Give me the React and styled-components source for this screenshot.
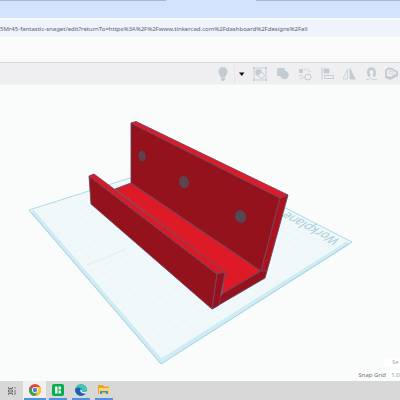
import React from "react";
import styled, { createGlobalStyle } from "styled-components";

const Global = createGlobalStyle`
  * { box-sizing: border-box; }
  html, body, #root { height: 100%; margin: 0; }
  body { overflow: hidden; background: #fafafa; font-family: "Open Sans", "Noto Sans", sans-serif; }
  button { border: 0; padding: 0; background: none; }
`;
const Screen = styled.div`
  display: flex;
  flex-direction: column;
  height: 100vh;
`;
const TabStrip = styled.div`
  display: flex;
  justify-content: space-between;
  height: 18px;
  flex: none;
  background: #d4e3fd;
`;
const TabEdge = styled.span`
  width: ${(p) => p.$width};
  height: 1px;
  background: #a5b7d8;
`;
const AddressBar = styled.form`
  display: flex;
  flex: none;
  height: 21px;
  padding: 2px 0;
  background: #fbfcfe;
`;
const AddressInput = styled.input`
  flex: 1;
  min-width: 0;
  border: 0;
  padding: 1px 0 0;
  outline: 0;
  background: #eff3fc;
  color: #5d6168;
  font: 6px "Noto Sans", "Open Sans", sans-serif;
`;
const PageHeader = styled.header`
  flex: none;
  height: 24px;
  background: #fafafa;
  border-bottom: 1px solid #d6dadb;
`;
const Toolbar = styled.div`
  display: flex;
  flex: none;
  justify-content: flex-end;
  align-items: center;
  height: 22px;
  background: #efeff1;
  border-bottom: 1px solid #f4f4f5;
  overflow: hidden;
`;
const Tool = styled.button`
  display: flex;
  flex: none;
  align-items: center;
  justify-content: center;
  width: ${(p) => p.$width || 22}px;
  height: 20px;
  color: #c3cbd3;
  border-left: ${(p) => (p.$divided ? "1px solid #e4e6e9" : "0")};
`;
const Workspace = styled.main`
  display: grid;
  grid-template: minmax(0, 1fr) / minmax(0, 1fr);
  flex: 1;
  min-height: 0;
  background: #fafbfb;
`;
const Scene = styled.svg`
  grid-area: 1 / 1;
  display: block;
  width: 100%;
  height: 100%;
`;
const Footer = styled.div`
  grid-area: 1 / 1;
  align-self: end;
  justify-self: end;
  display: flex;
  flex-direction: column;
  align-items: flex-end;
  gap: 2px;
  color: #686c73;
  font-size: 6px;
`;
const Settings = styled.button`
  width: 16px;
  height: 9px;
  padding-left: 8px;
  background: #fff;
  color: #a0a3a7;
  font: 6px/9px "Open Sans", sans-serif;
  text-align: left;
`;
const SnapRow = styled.div`
  display: flex;
  align-items: center;
  gap: 4px;
  height: 12px;
`;
const SnapValue = styled.button`
  width: 10px;
  height: 8px;
  padding-left: 1px;
  background: #fff;
  color: #8b8e92;
  font: 6px/8px "Open Sans", sans-serif;
`;
const Taskbar = styled.nav`
  display: flex;
  flex: none;
  height: 19px;
  background: #d8d8d8;
`;
const TaskButton = styled.button`
  display: flex;
  align-items: center;
  justify-content: center;
  width: ${(p) => p.$width}px;
  height: 19px;
  background: ${(p) => (p.$active ? "#f0f0f0" : "transparent")};
`;
const AppMark = styled.span`
  display: flex;
  align-items: center;
  justify-content: center;
  width: ${(p) => p.$line}px;
  height: 19px;
  border-bottom: 2px solid #4d91e0;
`;

const icons = {
  bulb: (
    <svg width="12" height="14" viewBox="0 0 12 14">
      <path d="M6 0a4.700 4.700 0 0 0-4.700 4.700C1.300 7 3.300 8 3.700 10h4.600C8.700 8 10.700 7 10.700 4.700A4.700 4.700 0 0 0 6 0z" fill="currentColor" />
      <path d="M4 10.500h4v2L7 14H5l-1-1.500z" fill="currentColor" />
    </svg>
  ),
  caret: <svg width="6" height="4" viewBox="0 0 6 4"><path d="M0 .5h5.500L2.800 4z" fill="#111" /></svg>,
  group: (
    <svg width="14" height="14" viewBox="0 0 14 14" fill="none" stroke="currentColor">
      <path d="M1 1h12v12H1z" strokeWidth=".9" />
      <path d="M0 0h2v2H0zM12 0h2v2h-2zM0 12h2v2H0zM12 12h2v2h-2z" fill="currentColor" stroke="none" />
      <path d="M3 3h5v5H3z" fill="currentColor" /><circle cx="8.500" cy="8.500" r="2.800" fill="#efeff1" />
    </svg>
  ),
  union: (
    <svg width="13" height="13" viewBox="0 0 13 13" fill="currentColor">
      <rect x="1" y="1" width="8" height="8" rx="1.500" /><circle cx="8.500" cy="8" r="4.300" />
    </svg>
  ),
  ungroup: (
    <svg width="14" height="14" viewBox="0 0 14 14" fill="none" stroke="currentColor">
      <path d="M1 2h4v4H1z" fill="currentColor" stroke="none" /><circle cx="10" cy="10" r="3" />
      <path d="M7 1v3M9 4l2-3M10 5l3-1M1 9l3-1M2 12l3-2M6 9v3" strokeWidth=".8" />
    </svg>
  ),
  align: (
    <svg width="13" height="13" viewBox="0 0 13 13" fill="none" stroke="currentColor">
      <path d="M1 0v13" /><path d="M3 2h5v4H3z" fill="currentColor" /><path d="M3.500 8.500h9v3h-9z" />
    </svg>
  ),
  mirror: (
    <svg width="14" height="12" viewBox="0 0 14 12" fill="none" stroke="currentColor">
      <path d="M8 .5V11h5z" fill="currentColor" /><path d="M5.500 1v10H1z" strokeWidth=".8" />
    </svg>
  ),
  magnet: (
    <svg width="13" height="13" viewBox="0 0 13 13" fill="none" stroke="currentColor">
      <path d="M4.500 9.500 3.200 5.500C2.600.3 10 .3 9.700 5.500L9 9.500" strokeWidth="2.600" />
      <path d="M1 12.500h2.500l2-1.500 2 1.500H12" strokeWidth=".8" />
    </svg>
  ),
  ruler: (
    <svg width="14" height="13" viewBox="0 0 14 13" fill="none" stroke="currentColor">
      <path d="M2 8V3.500C3 1.500 6 1 8 2l6 3.500" strokeWidth="1.800" />
      <path d="M1 7.500 6 10l8-4.500V9l-8 4-5-2.500z" fill="currentColor" stroke="none" /><ellipse cx="7" cy="5.500" rx="2" ry="1.300" strokeWidth=".8" />
    </svg>
  ),
};

const tools = [
  ["Show all", "bulb", 22],
  ["Show options", "caret", 14, true],
  ["Group", "group", 23],
  ["Union", "union", 22],
  ["Ungroup", "ungroup", 23],
  ["Align", "align", 22],
  ["Mirror", "mirror", 22],
  ["Magnet", "magnet", 22],
  ["Ruler", "ruler", 18],
];

function Grid() {
  const lines = [];
  for (let i = 1; i < 24; i++) {
    const t = i / 24;
    lines.push(`M${29 + 161 * t} ${125 - 51 * t}L${161 + 191 * t} ${279 - 122 * t}`);
    lines.push(`M${29 + 132 * t} ${125 + 154 * t}L${190 + 162 * t} ${74 + 83 * t}`);
  }
  return <path d={lines.join("")} stroke="#dceff3" strokeWidth=".4" opacity=".4" />;
}

function Model() {
  return (
    <Scene viewBox="0 0 400 296" preserveAspectRatio="xMidYMid meet" role="img" aria-label="Red wall bracket on a workplane">
      <path d="M29 125 190 74 352 157 161 279z" fill="#f0f8fa" />
      <Grid />
      <path d="M87 180l16-6 23-10" stroke="#d5dcde" strokeWidth=".5" fill="none" />
      <path d="M29 125 190 74 352 157" fill="none" stroke="#add9e6" />
      <path d="M32 126 161 276 348 158" fill="none" stroke="#cfebf3" strokeWidth="4" />
      <path d="M29 125 161 279 352 157" fill="none" stroke="#9dd0e2" />
      <text transform="translate(341 155) rotate(208) skewX(-29)" fill="#a3cbd8" fontFamily="Open Sans, sans-serif" fontSize="12">Workplane</text>
      <g stroke="#6b4661" strokeWidth=".9" strokeLinejoin="round">
        <path d="M131 98 115 104 225 187 222 209 261 186z" fill="#df1a27" />
        <path d="M131 38 280 113 261 186 131 98z" fill="#93121b" />
        <path d="M131 38 136 36.500 288 110 280 113z" fill="#df1a27" />
        <path d="M280 113 288 110 267 186 261 186z" fill="#ab121d" />
        <path d="M261 186 267 186 265 193 212 224 222 209z" fill="#94121b" />
        <path d="M89 91 217 189 212 224 91 119z" fill="#94121b" />
        <path d="M89 91 94 89 225 187 217 189z" fill="#d91925" />
        <path d="M217 189 225 187 219 220 212 224z" fill="#990f1b" />
      </g>
      <g fill="#5a4650" stroke="#51475d">
        <ellipse cx="142" cy="71" rx="3" ry="5" transform="rotate(-10 142 71)" />
        <ellipse cx="184" cy="97" rx="4.500" ry="5.500" transform="rotate(-15 184 97)" />
        <ellipse cx="240.500" cy="131.500" rx="5" ry="6" transform="rotate(-20 240.500 131.500)" />
      </g>
      <path d="M140 68 143 75M181.500 94 187 100" stroke="#8b303b" />
    </Scene>
  );
}

const Chrome = () => (
  <svg width="12" height="12" viewBox="0 0 12 12">
    <circle cx="6" cy="6" r="6" fill="#e34537" />
    <path d="M.8 3A6 6 0 0 0 6 12l2.600-4.500H3.400z" fill="#36a557" />
    <path d="M6 12A6 6 0 0 0 11.200 3H6l2.600 4.500z" fill="#f9c82e" />
    <circle cx="6" cy="6" r="3" fill="#fff" /><circle cx="6" cy="6" r="2.200" fill="#4285dd" />
  </svg>
);
const GreenApp = () => (
  <svg width="12" height="12" viewBox="0 0 12 12">
    <rect width="12" height="12" rx="2" fill="#08ad50" />
    <path d="M3 2.500h2.500v7H3zM6.500 2.500H9v3H6.500zM6.500 6.500H9v3H6.500z" fill="#effff4" />
  </svg>
);
const Edge = () => (
  <svg width="12" height="12" viewBox="0 0 12 12">
    <circle cx="6" cy="6" r="5.800" fill="#1876c9" />
    <path d="M.4 5C1.500-1.500 11.800-1 11.800 5.400 11.600 8 8 8.300 7 7c1-1.500-.5-3-2.500-3C2.500 4 1 4.500.4 5z" fill="#45c6b1" />
    <path d="M4.400 6c0 3 3 4.400 6.300 3.400C7 14 .2 11.700.3 6 .7 3.500 4 3 5.500 4.300z" fill="#2060ac" />
    <path d="M5.200 5.800c1-1 2.200 0 1.700 1.300.8 1.200 3 1 4.800.2l-.8 2C8 10 5 9 5.200 5.800z" fill="#e6eff4" />
  </svg>
);
const Folder = () => (
  <svg width="12" height="11" viewBox="0 0 12 11">
    <path d="M0 1h5l1 1.500h5V10H0z" fill="#e6a72c" /><path d="M1 4h10.500v6H1z" fill="#ffd56a" />
    <path d="M2 10V7h8v3H8V8.500H4V10z" fill="#3e91c9" />
  </svg>
);
const TaskView = () => (
  <svg width="8" height="8" viewBox="0 0 8 8" fill="none" stroke="#5a5a5a" strokeWidth=".8">
    <path d="M.5 0v1.500h4V0M.5 8V6.500h4V8M.5 3h4v2h-4zM7 0v1.500M7 3v5" />
  </svg>
);

export default function App() {
  return (
    <Screen>
      <Global />
      <TabStrip><TabEdge $width="41.500%" /><TabEdge $width="36%" /></TabStrip>
      <AddressBar>
        <AddressInput aria-label="Address" readOnly value="5Mr45-fantastic-snaget/edit?returnTo=https%3A%2F%2Fwww.tinkercad.com%2Fdashboard%2Fdesigns%2Fall" />
      </AddressBar>
      <PageHeader />
      <Toolbar>
        {tools.map(([label, icon, width, divided]) => (
          <Tool key={label} type="button" aria-label={label} $width={width} $divided={divided}>{icons[icon]}</Tool>
        ))}
      </Toolbar>
      <Workspace>
        <Model />
        <Footer>
          <Settings type="button" aria-label="Settings">Se</Settings>
          <SnapRow><span id="snap">Snap Grid</span><SnapValue type="button" aria-describedby="snap">1.0</SnapValue></SnapRow>
        </Footer>
      </Workspace>
      <Taskbar>
        <TaskButton type="button" aria-label="Task view" $width={23}><TaskView /></TaskButton>
        <TaskButton type="button" aria-label="Chrome" $width={23} $active><AppMark $line={22}><Chrome /></AppMark></TaskButton>
        <TaskButton type="button" aria-label="Green app" $width={23}><AppMark $line={18}><GreenApp /></AppMark></TaskButton>
        <TaskButton type="button" aria-label="Edge" $width={23}><AppMark $line={18}><Edge /></AppMark></TaskButton>
        <TaskButton type="button" aria-label="Files" $width={23}><AppMark $line={18}><Folder /></AppMark></TaskButton>
      </Taskbar>
    </Screen>
  );
}
